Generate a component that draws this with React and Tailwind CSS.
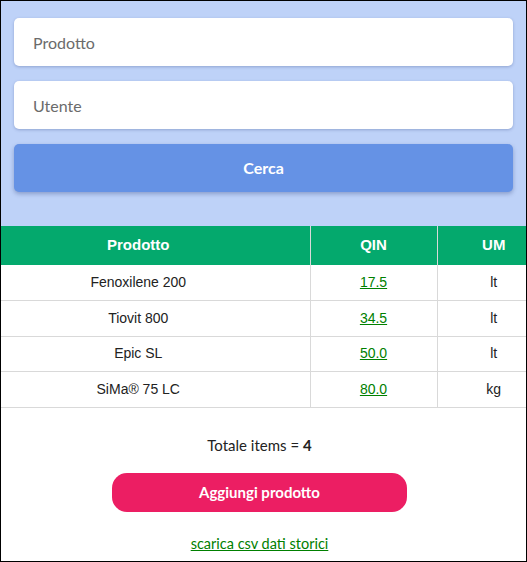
import React from 'react';

const rows = [
  { name: 'Fenoxilene 200', qin: '17.5', um: 'lt' },
  { name: 'Tiovit 800', qin: '34.5', um: 'lt' },
  { name: 'Epic SL', qin: '50.0', um: 'lt' },
  { name: 'SiMa® 75 LC', qin: '80.0', um: 'kg' },
];

export default function App() {
  return (
    <div className="h-[562px] w-[527px] border border-black bg-white overflow-hidden font-['Lato',sans-serif] text-[#222]">
      {/* Search panel */}
      <div className="bg-[#bed2f8] px-[13px] pt-[17px] pb-[34px] flex flex-col gap-[15px]">
        <input
          placeholder="Prodotto"
          className="h-[48px] w-full rounded-[5px] bg-white px-[19px] text-[16px] placeholder-[#6b6b6b] shadow-[0_1px_3px_rgba(60,80,140,0.35)] outline-none"
        />
        <input
          placeholder="Utente"
          className="h-[48px] w-full rounded-[5px] bg-white px-[19px] text-[16px] placeholder-[#6b6b6b] shadow-[0_1px_3px_rgba(60,80,140,0.35)] outline-none"
        />
        <button className="h-[48px] w-full rounded-[5px] bg-[#6592e5] text-[16px] font-bold text-white shadow-[0_2px_4px_rgba(40,60,120,0.35)]">
          Cerca
        </button>
      </div>

      {/* Table */}
      <div className="overflow-hidden">
        <table className="w-[549px] border-collapse font-['Liberation_Sans',Arial,sans-serif] text-[14px]">
          <thead>
            <tr className="bg-[#04a96d] text-white text-[15px] font-bold h-[39px]">
              <th className="w-[309px] pr-[34px] text-center">Prodotto</th>
              <th className="w-[127px] border-l border-[#d9d9d9] text-center">QIN</th>
              <th className="border-l border-[#d9d9d9] text-center">UM</th>
            </tr>
          </thead>
          <tbody>
            {rows.map((r) => (
              <tr key={r.name} className="h-[35.5px] border-b border-[#d9d9d9]">
                <td className="pr-[34px] text-center">{r.name}</td>
                <td className="border-l border-[#d9d9d9] text-center">
                  <a href="#" className="text-[#008000] underline">{r.qin}</a>
                </td>
                <td className="border-l border-[#d9d9d9] text-center">{r.um}</td>
              </tr>
            ))}
          </tbody>
        </table>
      </div>

      {/* Footer */}
      <div className="flex flex-col items-center pt-[26px] pr-[8px]">
        <p className="text-[15px]">
          Totale items = <b>4</b>
        </p>
        <button className="mt-[17px] h-[39px] w-[295px] rounded-[15px] bg-[#ec1e63] text-[15px] font-bold text-white">
          Aggiungi prodotto
        </button>
        <a href="#" className="mt-[21px] text-[14.5px] text-[#008000] underline">
          scarica csv dati storici
        </a>
      </div>
    </div>
  );
}
